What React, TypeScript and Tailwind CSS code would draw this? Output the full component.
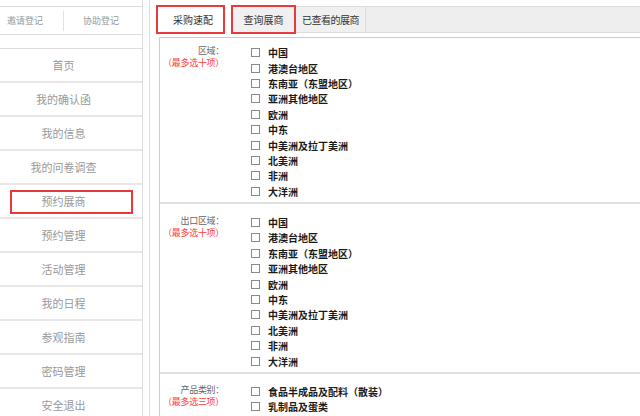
import React from 'react';

const REGIONS = [
  '中国',
  '港澳台地区',
  '东南亚（东盟地区）',
  '亚洲其他地区',
  '欧洲',
  '中东',
  '中美洲及拉丁美洲',
  '北美洲',
  '非洲',
  '大洋洲',
];

const CATEGORIES = ['食品半成品及配料（散装）', '乳制品及蛋类', '水产及水产品'];

const MENU = [
  '首页',
  '我的确认函',
  '我的信息',
  '我的问卷调查',
  '预约展商',
  '预约管理',
  '活动管理',
  '我的日程',
  '参观指南',
  '密码管理',
  '安全退出',
];

function Sidebar() {
  return (
    <div className="w-[158px] -ml-[15px] shrink-0 border-r border-[#dddddd]">
      <div className="h-[7px] border-b border-[#dddddd]" />
      <div className="flex h-[28px] items-center border-b border-[#dddddd] text-[9px] text-[#999999]">
        <div className="flex-1 text-center pl-[2px]">邀请登记</div>
        <div className="h-[20px] border-l border-[#e2e2e2]" />
        <div className="w-[78px] text-center pr-[4px]">协助登记</div>
      </div>
      <div className="mt-[13px] border-t border-[#dddddd]">
        {MENU.map((m, i) => (
          <div
            key={m}
            className="relative flex h-[34px] items-center justify-center border-b-2 border-[#e8e8e8] text-[11px] text-[#999999]"
          >
            {m}
            {i === 4 && (
              <div className="absolute left-[25px] top-[5px] h-[24px] w-[123px] border-2 border-[#e83a3a]" />
            )}
          </div>
        ))}
      </div>
    </div>
  );
}

function Tabs() {
  return (
    <div className="ml-[6px] mt-[6px] flex h-[27px] border-y border-[#dcdcdc] bg-[#eeeeee] text-[10px] text-[#333333]">
      <div className="-mt-[2px] flex h-[29px] w-[69px] items-center justify-center border-2 border-[#e83a3a] bg-white pl-[5px]">
        采购速配
      </div>
      <div className="-mt-px h-[27px] w-[6px] bg-white" />
      <div className="-mt-[2px] flex h-[29px] w-[65px] items-center justify-center border-2 border-[#e83a3a] bg-[#f0f0f0]">
        查询展商
      </div>
      <div className="flex w-[70px] items-center justify-center border-r border-[#dcdcdc] bg-[#f0f0f0] tracking-[-0.5px]">
        已查看的展商
      </div>
    </div>
  );
}

function Section({
  title,
  note,
  items,
  top,
  bottom,
}: {
  title: string;
  note: string;
  items: string[];
  top: string;
  bottom: string;
}) {
  return (
    <div className={`flex border-b-2 border-[#e0e0e0] ${top} ${bottom}`}>
      <div className="w-[64px] shrink-0 text-right text-[9px] leading-[12px] tracking-[-0.3px] text-[#666666]">
        <div>{title}</div>
        <div className="text-[#ff3b3b]">{note}</div>
      </div>
      <div className="ml-[27px] flex flex-col">
        {items.map((it) => (
          <div key={it} className="flex h-[15.4px] items-center">
            <span className="h-[9px] w-[9px] border border-[#8a8a8a] bg-white" />
            <span className="ml-[8px] text-[10px] font-bold text-[#1a1a1a]">{it}</span>
          </div>
        ))}
      </div>
    </div>
  );
}

export default function App() {
  return (
    <div className="flex h-[416px] w-[640px] overflow-hidden bg-white font-['Noto_Sans_CJK_SC','Liberation_Sans',sans-serif]">
      <Sidebar />
      <div className="ml-[6px] flex min-w-0 flex-1 flex-col border-l border-[#dddddd]">
        <Tabs />
        <div className="ml-[9px] mt-[4px] flex-1 border-l border-t border-[#cccccc]">
          <Section title="区域：" note="（最多选十项）" items={REGIONS} top="pt-[7px]" bottom="pb-[3px]" />
          <Section title="出口区域：" note="（最多选十项）" items={REGIONS} top="pt-[11px]" bottom="pb-[3px]" />
          <Section title="产品类别：" note="（最多选三项）" items={CATEGORIES} top="pt-[10px]" bottom="pb-[3px]" />
        </div>
      </div>
    </div>
  );
}
